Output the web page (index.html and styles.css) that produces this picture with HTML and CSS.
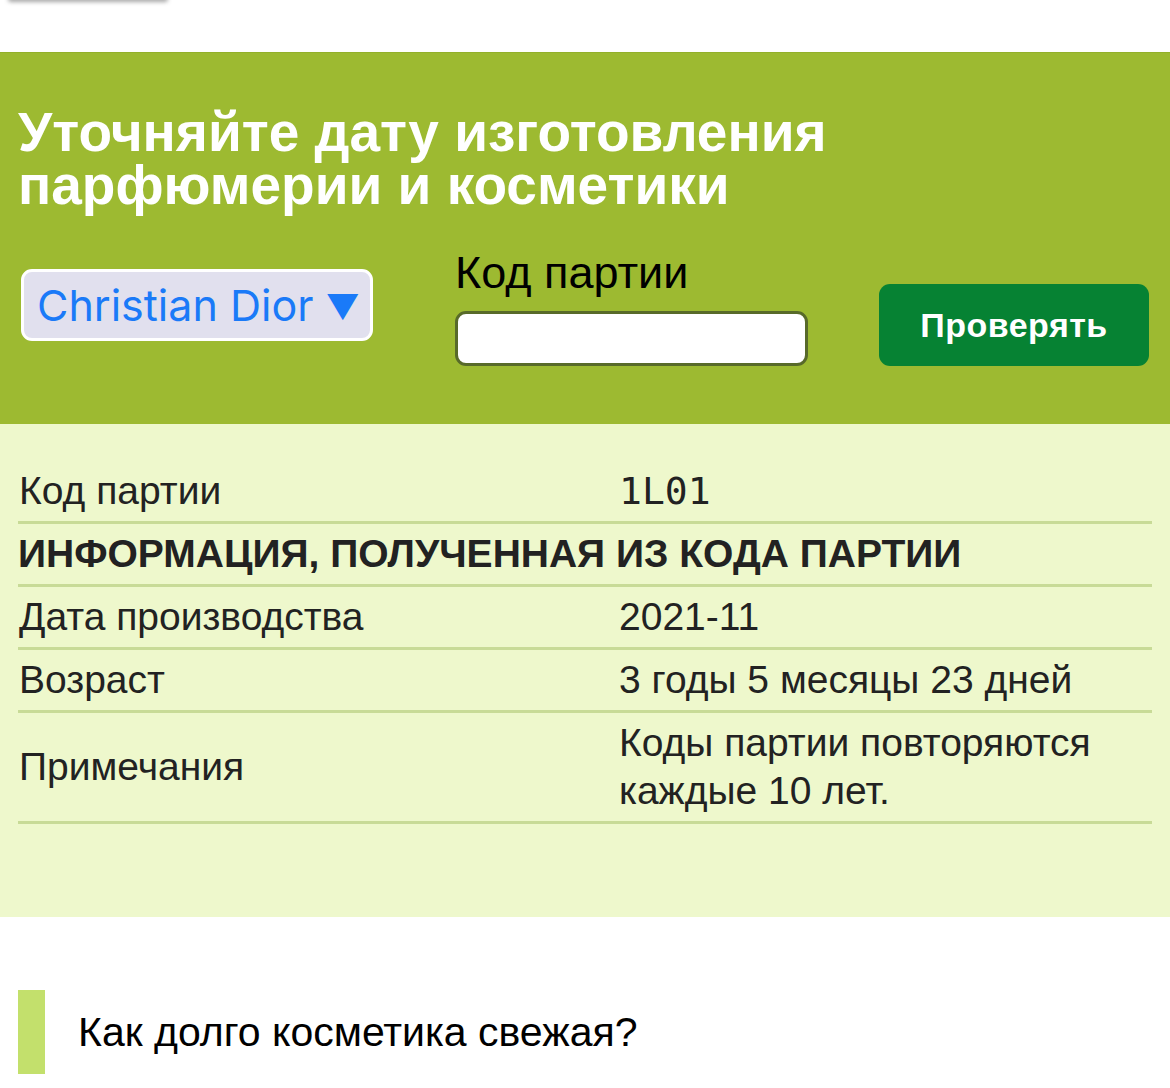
FILE: index.html
```html
<!DOCTYPE html>
<html lang="ru">
<head>
<meta charset="utf-8">
<title>Код партии</title>
<link rel="stylesheet" href="styles.css">
</head>
<body>
<div class="topbar"><div class="shadow"></div></div>
<section class="hero">
  <h1 class="title">Уточняйте дату изготовления<br>парфюмерии и косметики</h1>
  <form class="form">
    <div class="select">Christian Dior <span class="arrow">▼</span></div>
    <div class="field">
      <label class="label">Код партии</label>
      <div class="input"></div>
    </div>
    <button type="button" class="btn">Проверять</button>
  </form>
</section>
<section class="result">
  <div class="table">
    <div class="row"><div class="k">Код партии</div><div class="v mono">1L01</div></div>
    <div class="row head"><div class="full">ИНФОРМАЦИЯ, ПОЛУЧЕННАЯ ИЗ КОДА ПАРТИИ</div></div>
    <div class="row"><div class="k">Дата производства</div><div class="v">2021-11</div></div>
    <div class="row"><div class="k">Возраст</div><div class="v">3 годы 5 месяцы 23 дней</div></div>
    <div class="row"><div class="k">Примечания</div><div class="v">Коды партии повторяются<br>каждые 10 лет.</div></div>
  </div>
</section>
<section class="faq">
  <div class="q"><span class="bar"></span><span class="qt">Как долго косметика свежая?</span></div>
</section>
</body>
</html>
```
FILE: styles.css
```css
* { box-sizing: border-box; }
html, body { margin: 0; padding: 0; background: #fff; }
body { font-family: "Liberation Sans", Arial, sans-serif; color: #222; }

.topbar { height: 52px; position: relative; overflow: hidden; }
.shadow { position: absolute; left: 8px; top: -6px; width: 160px; height: 6px; border-radius: 3px; box-shadow: 0 2px 4px rgba(0,0,0,0.35); background: #fff; }

.hero { background: #9dba31; border-top: 1px solid #93b02a; padding: 53px 18px 0 18px; height: 372px; }
.title { margin: 0; color: #fff; font-weight: bold; font-size: 55px; line-height: 53px; letter-spacing: 0; }
.form { display: flex; align-items: flex-start; margin-top: 39px; }
.select { margin-left: 3px; margin-top: 18px; width: 352px; height: 72px; background: #e1e0ee; border: 3px solid #fff; border-radius: 11px; color: #1a7af8; font-family: Inter, "Noto Sans", sans-serif; font-size: 43px; line-height: 66px; padding-left: 13px; white-space: nowrap; }
.arrow { font-size: 34px; vertical-align: 2px; }
.field { margin-left: 82px; display: flex; flex-direction: column; }
.label { color: #000; font-size: 45px; line-height: 44px; height: 44px; }
.input { margin-top: 16px; width: 353px; height: 55px; background: #fff; border: 3px solid #586a2a; border-radius: 11px; }
.btn { margin-left: 71px; margin-top: 33px; width: 270px; height: 82px; background: #068233; color: #fff; border: none; border-radius: 11px; font-family: "Liberation Sans", Arial, sans-serif; font-weight: bold; font-size: 34px; letter-spacing: 0.5px; }

.result { background: #eef8cc; padding: 37px 18px 0 18px; height: 493px; }
.table { width: 1134px; }
.row { display: flex; align-items: center; border-bottom: 3px solid #c8db97; padding: 6px 0; font-size: 39px; line-height: 48px; color: #222; }
.k, .v, .full { line-height: 48px; }
.k { width: 601px; padding-left: 1px; }
.v { flex: 1; }
.mono { font-family: "DejaVu Sans Mono", monospace; font-size: 38px; height: 48px; }
.head .full { font-weight: bold; }

.faq { padding: 73px 18px 0 18px; }
.q { display: flex; align-items: center; height: 84px; }
.bar { width: 27px; height: 84px; background: #c3e06c; }
.qt { margin-left: 33px; color: #000; font-size: 41px; }
```
